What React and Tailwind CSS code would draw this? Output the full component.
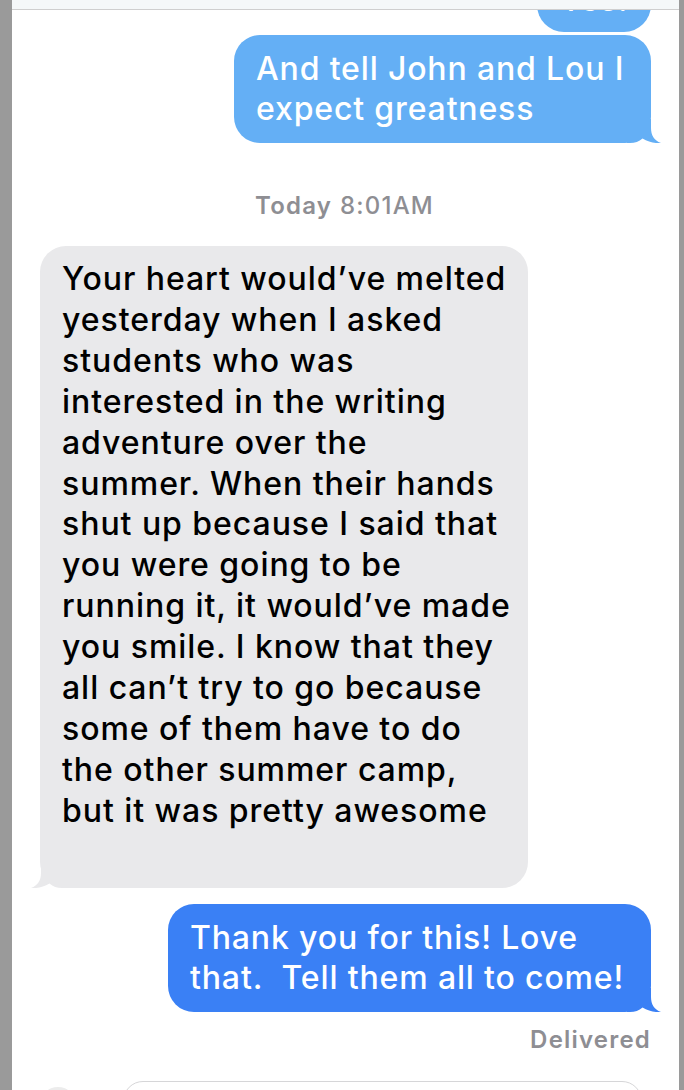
import React from "react";

function Tail({ side, color }) {
  const cls =
    side === "right"
      ? "absolute right-[-10px] bottom-0 w-[34px] h-[24px]"
      : "absolute left-[-9px] bottom-0 w-[34px] h-[24px] -scale-x-100";
  return (
    <svg className={cls} viewBox="0 0 34 24" fill={color}>
      <path d="M0 0 H24 V9 C24 16 27 21.5 34 24 C28 24.6 21.5 23 15.5 19.5 C12 22.5 8 24 3 24 H0 Z" />
    </svg>
  );
}

const font = { fontFamily: "Inter, 'Noto Sans', sans-serif" };

export default function App() {
  const grayLines = [
    "Your heart would’ve melted",
    "yesterday when I asked",
    "students who was",
    "interested in the writing",
    "adventure over the",
    "summer. When their hands",
    "shut up because I said that",
    "you were going to be",
    "running it, it would’ve made",
    "you smile. I know that they",
    "all can’t try to go because",
    "some of them have to do",
    "the other summer camp,",
    "but it was pretty awesome",
  ];
  return (
    <div className="w-[684px] h-[1090px] overflow-hidden flex bg-white" style={font}>
      <div className="w-[12px] shrink-0 bg-[#9a9a9a]" />
      <div className="flex-1 flex flex-col overflow-hidden">
        <div className="relative z-10 h-[10px] shrink-0 bg-[#f5f8f9] border-b border-[#cfcfcf]" />
        <div className="flex flex-col">
          {/* partial top bubble */}
          <div className="self-end mr-[28px] -mt-[32px] w-[114px] h-[54px] rounded-[27px] bg-[#64aff5] text-white text-[32px] leading-[40px] font-[450] tracking-[0.8px] flex items-start justify-center pt-[2px]">
            Yes!
          </div>
          {/* bubble 2 */}
          <div className="self-end mr-[28px] mt-[3px] relative w-[417px]">
            <div className="rounded-[26px] bg-[#64aff5] text-white text-[32px] leading-[40px] font-[450] tracking-[0.85px] pl-[22px] py-[14px] whitespace-nowrap">
              And tell John and Lou I
              <br />
              expect greatness
            </div>
            <Tail side="right" color="#64aff5" />
          </div>
          {/* timestamp */}
          <div className="mt-[49px] text-center text-[24px] leading-[28px] tracking-[1.2px] text-[#8e8e93] pr-[2px]">
            <span className="font-semibold">Today</span>{" "}
            <span className="font-medium">8:01AM</span>
          </div>
          {/* gray bubble */}
          <div className="self-start ml-[28px] mt-[26px] relative w-[488px]">
            <div className="rounded-[26px] bg-[#e9e9eb] text-black text-[32px] leading-[40.9px] font-[450] tracking-[0.95px] pl-[22px] pt-[13px] pb-[56px] whitespace-nowrap">
              {grayLines.map((l, i) => (
                <div key={i}>{l}</div>
              ))}
            </div>
            <Tail side="left" color="#e9e9eb" />
          </div>
          {/* blue bubble 3 */}
          <div className="self-end mr-[28px] mt-[16px] relative w-[483px]">
            <div className="rounded-[26px] bg-[#3a80f5] text-white text-[32px] leading-[40px] font-[450] tracking-[0.85px] pl-[22px] py-[14px] whitespace-pre">
              {"Thank you for this! Love\nthat.  Tell them all to come!"}
            </div>
            <Tail side="right" color="#3a80f5" />
          </div>
          {/* delivered */}
          <div className="self-end mr-[28px] mt-[14px] text-[24px] leading-[28px] tracking-[1.2px] font-semibold text-[#8e8e93]">
            Delivered
          </div>
          {/* input row */}
          <div className="mt-[27px] flex items-start">
            <div className="ml-[28px] mt-[6px] w-[36px] h-[36px] rounded-full bg-[#ececec] shrink-0" />
            <div className="ml-[47px] w-[519px] h-[40px] rounded-full border-[1.5px] border-[#d6d6d8] shrink-0" />
          </div>
        </div>
      </div>
      <div className="w-[5px] shrink-0 bg-[#9a9a9a]" />
    </div>
  );
}
